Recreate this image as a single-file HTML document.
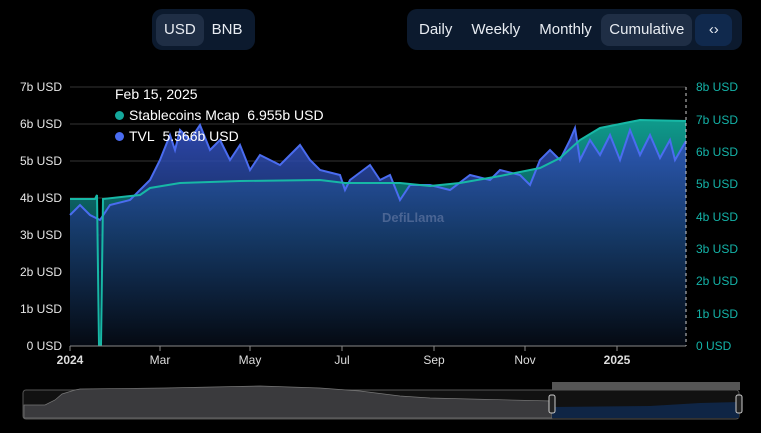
<!DOCTYPE html><html><head><style>
body{margin:0;width:761px;height:433px;background:#000;font-family:"Liberation Sans",sans-serif;position:relative;overflow:hidden;color:#fff}
.grp{position:absolute;top:9px;height:41px;background:#0c1a2e;border-radius:10px;display:flex;align-items:center;padding:0 4px;box-sizing:border-box}
.b{font-size:15px;padding:0 8px;height:32px;line-height:32px;border-radius:8px;color:#e8ecf2}
.g2 .b{padding:0 9.5px}
.on{background:#1f2e45}
.yl{position:absolute;font-size:12px;color:#e6e6e6;right:699px}
.yr{position:absolute;font-size:12px;color:#14b3a8;left:696px}
.xl{position:absolute;top:353px;font-size:12px;color:#ddd;transform:translateX(-50%)}
</style></head><body>
<div class="grp" style="left:152px;width:103px"><span class="b on">USD</span><span class="b">BNB</span></div>
<div class="grp g2" style="left:407px;width:335px"><span class="b" style="padding-left:8px">Daily</span><span class="b">Weekly</span><span class="b">Monthly</span><span class="b on" style="padding:0 8px">Cumulative</span><span class="b" style="background:#10294d;width:37px;padding:0;box-sizing:border-box;text-align:center;margin-left:3px">‹›</span></div>
<svg width="761" height="433" style="position:absolute;left:0;top:0">
<defs>
<linearGradient id="gb" x1="0" y1="0" x2="0" y2="1"><stop offset="0" stop-color="#3552c8"/><stop offset=".5" stop-color="#17366a"/><stop offset="1" stop-color="#050a14"/></linearGradient>
<linearGradient id="gt" x1="0" y1="0" x2="0" y2="1"><stop offset="0" stop-color="#0f9b8c"/><stop offset=".5" stop-color="#0a4a50"/><stop offset="1" stop-color="#020808"/></linearGradient>
</defs>
<g stroke="#333" stroke-width="1"><line x1="70" y1="87" x2="686" y2="87"/><line x1="70" y1="124" x2="686" y2="124"/><line x1="70" y1="161" x2="686" y2="161"/><line x1="70" y1="198" x2="686" y2="198"/><line x1="70" y1="235" x2="686" y2="235"/><line x1="70" y1="272" x2="686" y2="272"/><line x1="70" y1="309" x2="686" y2="309"/></g>
<path d="M70 199 L95 199 L97 195 L99 345 L101 345 L103 199 L140 195 L150 188 L180 183 L240 181 L320 180 L345 183 L400 183 L430 186 L460 183 L500 176 L540 168 L560 158 L580 140 L600 128 L640 120 L686 121 L686 346 L70 346Z" fill="url(#gt)"/>
<path d="M70 215 L80 205 L90 215 L100 220 L110 205 L130 200 L150 180 L160 160 L170 135 L175 150 L180 130 L190 140 L200 125 L210 150 L220 140 L230 160 L240 145 L250 170 L260 155 L280 165 L300 145 L310 160 L320 170 L340 175 L345 190 L350 180 L370 165 L380 180 L390 175 L400 200 L410 185 L430 185 L450 190 L470 175 L490 180 L500 170 L520 175 L530 185 L540 160 L550 150 L560 160 L570 140 L575 128 L580 160 L590 140 L600 155 L610 135 L620 160 L630 130 L640 155 L650 135 L660 158 L670 140 L675 160 L686 141 L686 346 L70 346Z" fill="url(#gb)" fill-opacity=".85"/>
<path d="M70 215 L80 205 L90 215 L100 220 L110 205 L130 200 L150 180 L160 160 L170 135 L175 150 L180 130 L190 140 L200 125 L210 150 L220 140 L230 160 L240 145 L250 170 L260 155 L280 165 L300 145 L310 160 L320 170 L340 175 L345 190 L350 180 L370 165 L380 180 L390 175 L400 200 L410 185 L430 185 L450 190 L470 175 L490 180 L500 170 L520 175 L530 185 L540 160 L550 150 L560 160 L570 140 L575 128 L580 160 L590 140 L600 155 L610 135 L620 160 L630 130 L640 155 L650 135 L660 158 L670 140 L675 160 L686 141" fill="none" stroke="#4a6cf0" stroke-width="2"/>
<path d="M70 199 L95 199 L97 195 L99 345 L101 345 L103 199 L140 195 L150 188 L180 183 L240 181 L320 180 L345 183 L400 183 L430 186 L460 183 L500 176 L540 168 L560 158 L580 140 L600 128 L640 120 L686 121" fill="none" stroke="#17b8a6" stroke-width="2"/>
<line x1="686" y1="87" x2="686" y2="346" stroke="#ccc" stroke-dasharray="3,3"/>
<line x1="70" y1="346" x2="686" y2="346" stroke="#888"/>
<g stroke="#888"><line x1="70" y1="346" x2="70" y2="351"/><line x1="160" y1="346" x2="160" y2="351"/><line x1="250" y1="346" x2="250" y2="351"/><line x1="342" y1="346" x2="342" y2="351"/><line x1="434" y1="346" x2="434" y2="351"/><line x1="525" y1="346" x2="525" y2="351"/><line x1="617" y1="346" x2="617" y2="351"/></g>
<text x="382" y="222" fill="#6b7fa8" fill-opacity=".6" font-size="13" font-weight="bold" font-family="Liberation Sans">DefiLlama</text>
<rect x="23" y="390" width="716" height="29" rx="3" fill="#111" stroke="#555"/>
<path d="M24 418 L24 405 L45 405 L55 400 L62 394 L75 390 L80 389 L165 388 L260 386 L320 388 L360 391 L400 396 L430 398 L470 399 L552 401 L552 418Z" fill="#3a3a3d" stroke="#777" stroke-width=".7"/>
<path d="M552 418 L552 407 L650 406 L700 403 L739 402 L739 418Z" fill="#0f2545"/>
<rect x="552" y="382" width="188" height="8" fill="#555"/>
<rect x="549" y="395" width="6" height="18" rx="2" fill="#222" stroke="#ccc"/><rect x="736" y="395" width="6" height="18" rx="2" fill="#222" stroke="#ccc"/>
</svg>
<div style="position:absolute;left:115px;top:84px;font-size:14px;line-height:21px">Feb 15, 2025<br><span style="display:inline-block;width:9px;height:9px;border-radius:50%;background:#14a89c;margin-right:5px"></span>Stablecoins Mcap&nbsp; 6.955b USD<br><span style="display:inline-block;width:9px;height:9px;border-radius:50%;background:#4a6cf0;margin-right:5px"></span>TVL&nbsp; 5.566b USD</div>
<div class="yl" style="top:80px">7b USD</div><div class="yl" style="top:117px">6b USD</div><div class="yl" style="top:154px">5b USD</div><div class="yl" style="top:191px">4b USD</div><div class="yl" style="top:228px">3b USD</div><div class="yl" style="top:265px">2b USD</div><div class="yl" style="top:302px">1b USD</div><div class="yl" style="top:339px">0 USD</div>
<div class="yr" style="top:80px">8b USD</div><div class="yr" style="top:113px">7b USD</div><div class="yr" style="top:145px">6b USD</div><div class="yr" style="top:177px">5b USD</div><div class="yr" style="top:210px">4b USD</div><div class="yr" style="top:242px">3b USD</div><div class="yr" style="top:274px">2b USD</div><div class="yr" style="top:307px">1b USD</div><div class="yr" style="top:339px">0 USD</div>
<div class="xl" style="left:70px;font-weight:bold">2024</div><div class="xl" style="left:160px">Mar</div><div class="xl" style="left:250px">May</div><div class="xl" style="left:342px">Jul</div><div class="xl" style="left:434px">Sep</div><div class="xl" style="left:525px">Nov</div><div class="xl" style="left:617px;font-weight:bold">2025</div>
</body></html>
